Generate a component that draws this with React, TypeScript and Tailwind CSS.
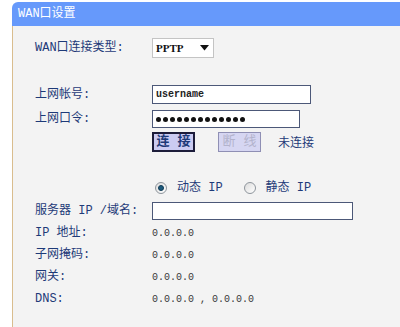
const cjk = { fontFamily: '"Liberation Mono","Noto Sans CJK SC",monospace' }

function Label({ children }: { children: React.ReactNode }) {
  return <div className="w-[117px] shrink-0 text-[12px] text-[#1e3a78] whitespace-nowrap">{children}</div>
}

function Radio({ on }: { on?: boolean }) {
  return (
    <div className="w-[12px] h-[12px] rounded-full border border-[#8e959c] bg-gradient-to-br from-[#dcdcdc] to-[#ffffff] flex items-center justify-center">
      {on && <div className="w-[6px] h-[6px] rounded-full bg-[#1d5a7c] border border-[#0f3a55]" />}
    </div>
  )
}

export default function App() {
  return (
    <div className="w-[400px] h-[327px] bg-white pl-[12px] pt-[2px] overflow-hidden" style={cjk}>
      <div className="h-[24px] bg-[#6699fb] rounded-tl-[6px] pl-[6px] flex items-center text-white text-[12px]">
        WAN口设置
      </div>
      <div className="h-[301px] border-l border-[#d9bd8e] bg-[#f3f3f3] pl-[22px] flex flex-col">
        <div className="mt-[12px] h-[20px] flex items-center">
          <Label>WAN口连接类型:</Label>
          <div className="w-[62px] h-[20px] bg-white border border-[#c4c4c4] flex items-center justify-between pl-[3px] pr-[4px]">
            <span className="text-[11px] font-bold text-[#111]" style={{ fontFamily: '"Liberation Serif",serif' }}>PPTP</span>
            <svg width="9" height="6" viewBox="0 0 9 6"><path d="M0 0h9L4.5 5.5z" fill="#111" /></svg>
          </div>
        </div>

        <div className="mt-[27px] h-[19px] flex items-center">
          <Label>上网帐号:</Label>
          <div className="w-[159px] h-[19px] bg-white border border-[#4c5878] flex items-center pl-[3px]">
            <span className="text-[10px] font-bold text-[#222]">username</span>
          </div>
        </div>

        <div className="mt-[6px] h-[18px] flex items-center">
          <Label>上网口令:</Label>
          <div className="w-[148px] h-[18px] bg-white border border-[#4c5878] flex items-center gap-[2px] pl-[3px]">
            {Array.from({ length: 13 }).map((_, i) => (
              <div key={i} className="w-[5px] h-[5px] rounded-full bg-[#111]" />
            ))}
          </div>
        </div>

        <div className="mt-[4px] h-[20px] flex items-center">
          <div className="w-[117px] shrink-0" />
          <div className="w-[43px] h-[20px] border-2 border-[#1c1c3a] bg-[#cbcbf2] flex items-center justify-center text-[13px] font-bold text-[#1e3a78] whitespace-nowrap">
            连&nbsp;接
          </div>
          <div className="ml-[23px] w-[43px] h-[20px] border border-[#8f8fb4] bg-[#d6d6f2] flex items-center justify-center text-[13px] text-[#b3b3cc] whitespace-nowrap">
            断&nbsp;线
          </div>
          <div className="ml-[17px] mt-[3px] text-[12px] text-[#1e3a78]">未连接</div>
        </div>

        <div className="mt-[28px] h-[16px] flex items-center">
          <div className="w-[117px] shrink-0" />
          <div className="ml-[3px]"><Radio on /></div>
          <span className="ml-[10px] text-[12px] text-[#1e3a78]">动态 IP</span>
          <div className="ml-[21px]"><Radio /></div>
          <span className="ml-[10px] text-[12px] text-[#1e3a78]">静态 IP</span>
        </div>

        <div className="mt-[6px] h-[18px] flex items-center">
          <Label>服务器 IP /域名:</Label>
          <div className="w-[201px] h-[18px] bg-white border border-[#4c5878]" />
        </div>

        {[
          ['IP 地址:', '0.0.0.0'],
          ['子网掩码:', '0.0.0.0'],
          ['网关:', '0.0.0.0'],
          ['DNS:', '0.0.0.0 , 0.0.0.0'],
        ].map(([k, v], i) => (
          <div key={k} className={`${i === 0 ? 'mt-[3px]' : 'mt-[2px]'} h-[20px] flex items-center`}>
            <Label>{k}</Label>
            <span className="text-[10px] text-[#3a3a3a]">{v}</span>
          </div>
        ))}
      </div>
    </div>
  )
}
